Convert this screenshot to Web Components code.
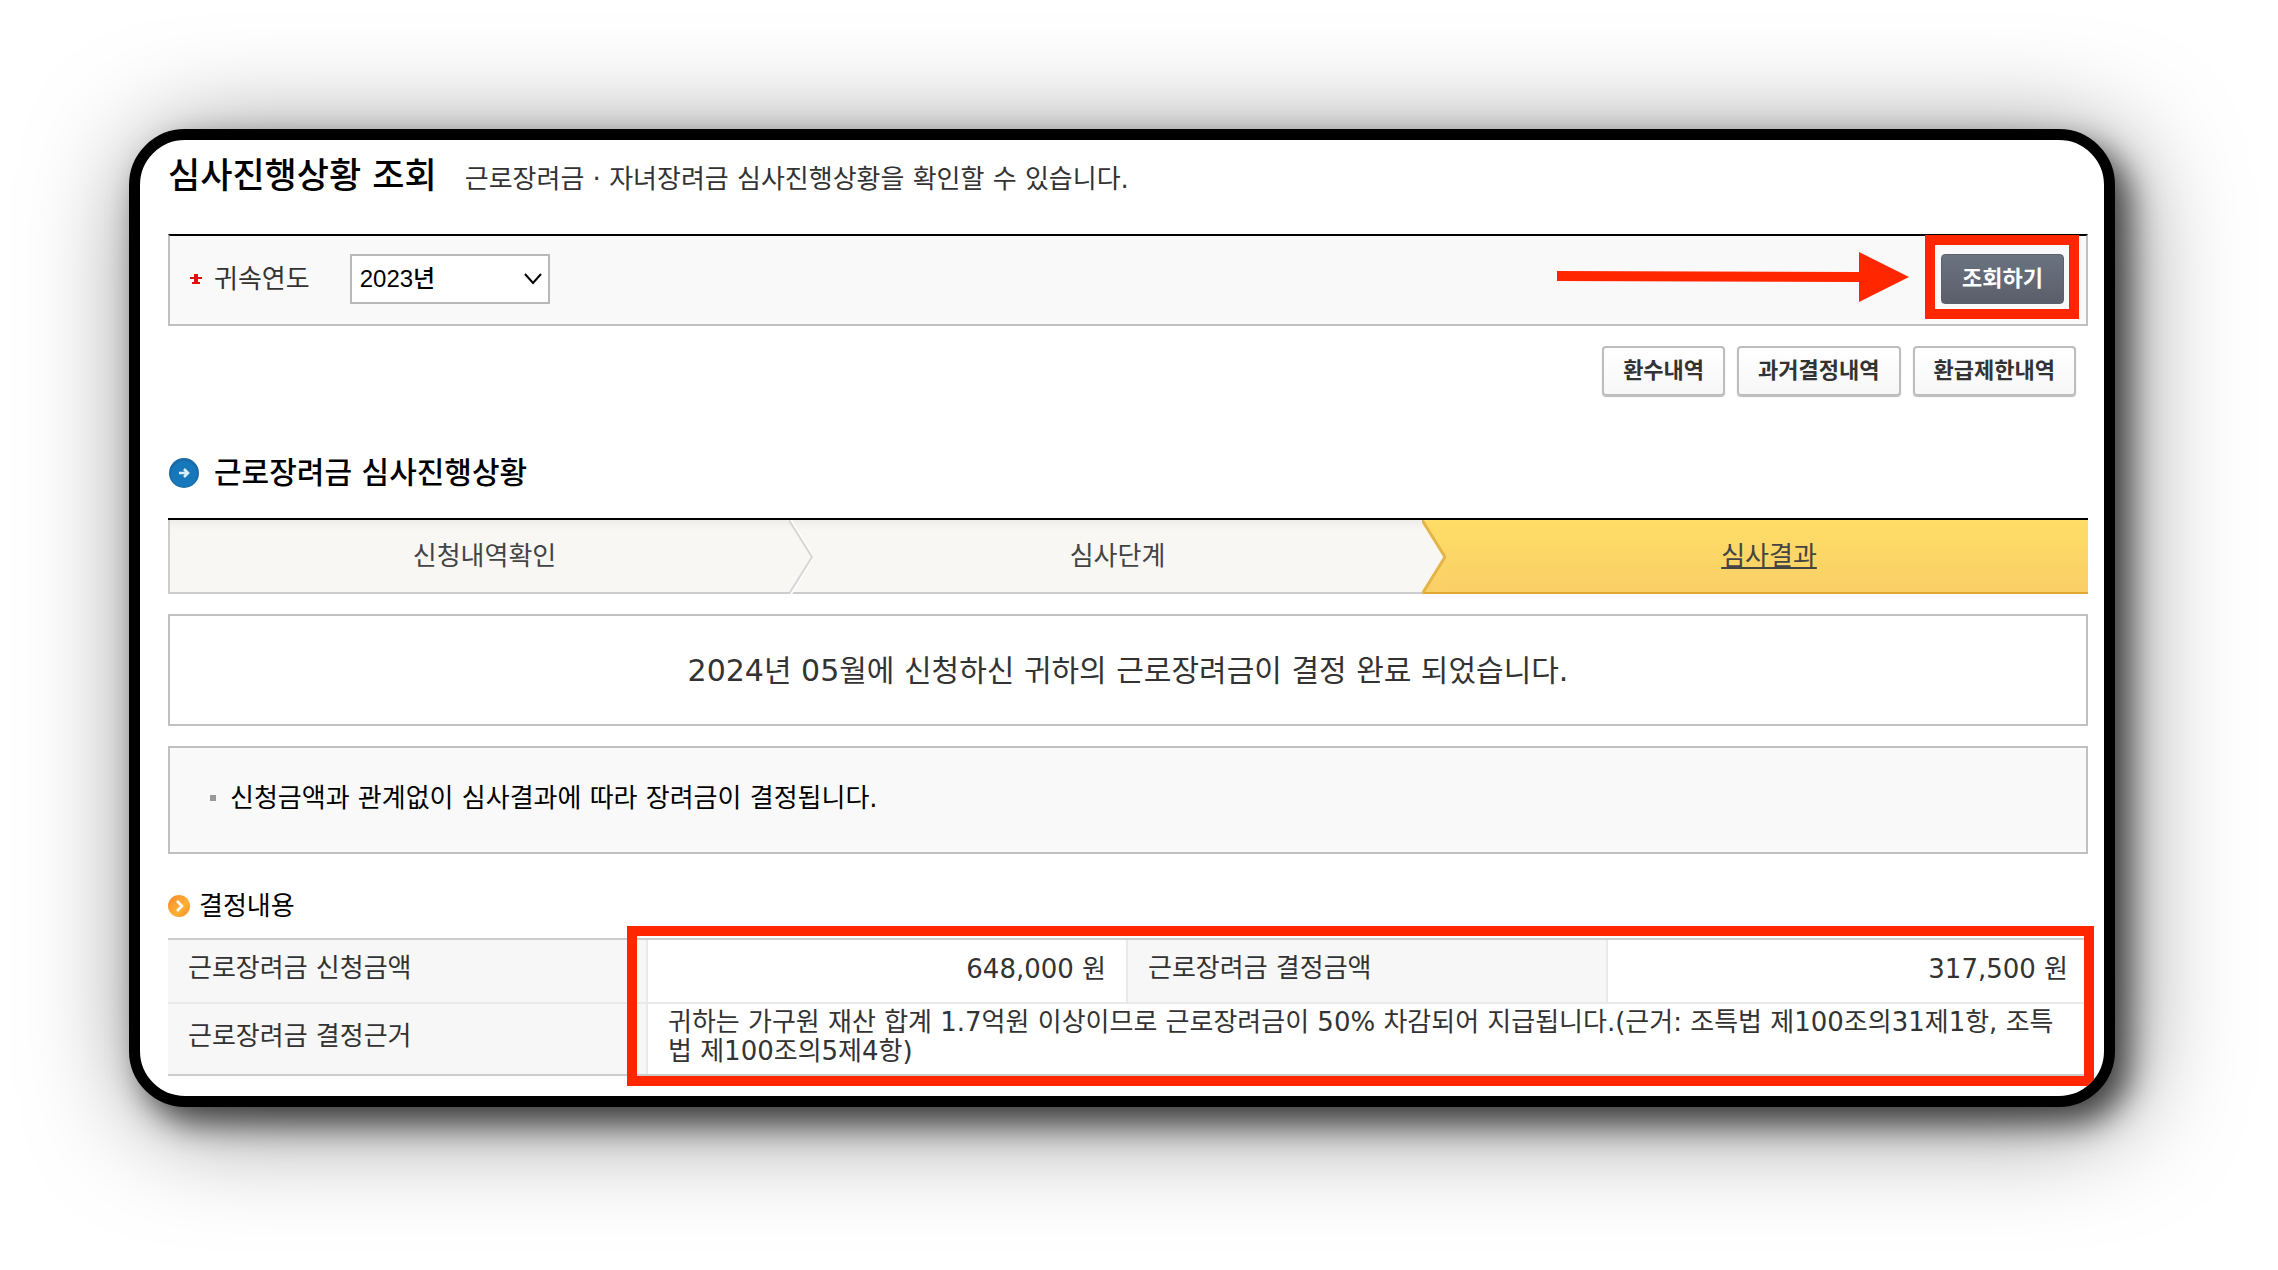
<!DOCTYPE html>
<html lang="ko">
<head>
<meta charset="utf-8">
<title>심사진행상황 조회</title>
<style>
  body {
    margin: 0;
    padding: 129px 163px 163px 129px;
    background: #fff;
    color: #333;
    font: 26px/30px "DejaVu Sans", "Noto Sans CJK KR", sans-serif;
  }
</style>
</head>
<body>
<screen-card>
  <page-title>
    심사진행상황 조회
    <span slot="description">근로장려금 · 자녀장려금 심사진행상황을 확인할 수 있습니다.</span>
  </page-title>
  <search-panel></search-panel>
  <history-actions></history-actions>
  <section-title>근로장려금 심사진행상황</section-title>
  <progress-steps></progress-steps>
  <message-box>2024년 05월에 신청하신 귀하의 근로장려금이 결정 완료 되었습니다.</message-box>
  <note-box>신청금액과 관계없이 심사결과에 따라 장려금이 결정됩니다.</note-box>
  <sub-title>결정내용</sub-title>
  <decision-table></decision-table>
</screen-card>

<script>
const define = (name, html) => {
  const template = document.createElement('template');
  template.innerHTML = html;
  customElements.define(name, class extends HTMLElement {
    constructor() {
      super();
      this.attachShadow({ mode: 'open' }).append(template.content.cloneNode(true));
    }
  });
};

define('screen-card', `
  <style>
    :host {
      display: block;
      border: 11px solid #000;
      border-radius: 56px;
      background: #fff;
      overflow: hidden;
      box-shadow: 14px 16px 32px rgba(0,0,0,.65), 12px 14px 110px rgba(0,0,0,.5);
    }
    main { display: block; padding: 16px 16px 20px 28px; }
  </style>
  <main><slot></slot></main>`);

define('page-title', `
  <style>
    :host { display: flex; align-items: baseline; gap: 28px; height: 78px; }
    h1 { margin: 0; font-size: 35px; line-height: 40px; font-weight: 500; color: #000; }
    p { margin: 0; }
  </style>
  <h1><slot></slot></h1>
  <p><slot name="description"></slot></p>`);

define('search-panel', `
  <style>
    :host { display: block; }
    form {
      display: flex; align-items: center;
      padding: 18px 22px 20px 20px;
      border: 2px solid #c0c0c0; border-top-color: #000;
      background: #f9f9f9;
    }
    .mark { width: 12px; height: 12px; margin-right: 12px; }
    label { margin-right: 40px; }
    .pick { position: relative; width: 200px; }
    select {
      appearance: none; display: block; width: 100%; height: 50px; margin: 0; padding: 0 8px;
      border: 2px solid #b9b9b9; border-radius: 0; background: #fff; color: #000;
      font: 500 24px/30px "Liberation Sans", "Noto Sans CJK KR", sans-serif;
    }
    .pick svg { position: absolute; right: 8px; top: 19px; pointer-events: none; }
    .action { position: relative; margin-left: auto; }
    button {
      display: block; height: 50px; width: 123px; padding: 0; border: 1px solid #5b616d; border-radius: 4px;
      background: linear-gradient(#6b7380, #5a5e6a); color: #fff;
      font: 700 22px/30px "DejaVu Sans", "Noto Sans CJK KR", sans-serif;
    }
    .ring { position: absolute; inset: -19px -15px -15px -16px; border: 10px solid #ff2600; }
    .arrow { position: absolute; right: 155px; top: -2px; }
  </style>
  <form>
    <svg class="mark" viewBox="0 0 12 12"><path d="M4 1h4v3h4v2H8v3h2v2H2V9h2V6H0V4h4z" fill="#e01010"/></svg>
    <label for="year">귀속연도</label>
    <div class="pick">
      <select id="year"><option>2023년</option></select>
      <svg width="18" height="12" viewBox="0 0 18 12"><path d="M1 1l8 9 8-9" fill="none" stroke="#000" stroke-width="2"/></svg>
    </div>
    <div class="action">
      <button type="button">조회하기</button>
      <div class="ring"></div>
      <svg class="arrow" width="352" height="50" viewBox="0 0 352 50"><path d="M0 19l302 1V0l50 25-50 25V30L0 29z" fill="#ff2600"/></svg>
    </div>
  </form>`);

define('history-actions', `
  <style>
    :host { display: flex; justify-content: flex-end; gap: 12px; padding: 20px 12px 0 0; }
    button {
      height: 50px; padding: 0 19px; border: 2px solid #bdbdbd; border-radius: 4px;
      background: linear-gradient(#fff, #f7f7f7); color: #333; box-shadow: 0 1px 1px #bbb;
      font: 700 22px/30px "DejaVu Sans", "Noto Sans CJK KR", sans-serif;
    }
  </style>
  <button type="button">환수내역</button>
  <button type="button">과거결정내역</button>
  <button type="button">환급제한내역</button>`);

define('section-title', `
  <style>
    :host { display: flex; align-items: center; gap: 15px; padding: 58px 0 26px 1px; }
    h2 { margin: 0; font-size: 30px; line-height: 38px; font-weight: 500; color: #000; }
  </style>
  <svg width="30" height="30" viewBox="0 0 30 30">
    <circle cx="15" cy="15" r="15" fill="#1b6aa8"/><circle cx="15" cy="16" r="13" fill="#1678bb"/>
    <path d="M10 15h9M15 11l4 4-4 4" fill="none" stroke="#d9effb" stroke-width="2.6"/>
  </svg>
  <h2><slot></slot></h2>`);

define('progress-steps', `
  <style>
    :host { display: block; }
    ol {
      display: grid; grid-template-columns: 621fr 24px 609fr 24px 642fr;
      margin: 0; padding: 0; list-style: none; border-top: 2px solid #000; color: #444;
    }
    li { box-sizing: border-box; height: 74px; display: flex; align-items: center; justify-content: center; }
    .step { background: linear-gradient(#eeede9, #f8f7f3 10px); border-bottom: 2px solid #ccc; }
    .first { border-left: 2px solid #ccc; padding-left: 10px; }
    .now { background: linear-gradient(#ffdd66, #f9cf66); border-bottom: 2px solid #e0a832; padding-left: 4px; }
    svg { display: block; }
    a { color: inherit; text-decoration: underline; text-decoration-thickness: 2px; text-underline-offset: 2px; }
  </style>
  <ol>
    <li class="step first">신청내역확인</li>
    <li role="presentation"><svg width="24" height="74" viewBox="0 0 24 74">
      <defs><linearGradient id="g" x2="0" y2="1"><stop stop-color="#eeede9"/><stop offset=".14" stop-color="#f8f7f3"/></linearGradient></defs>
      <path d="M0 0h24v74H0z" fill="url(#g)"/><path d="M0 73h24" stroke="#ccc" stroke-width="2"/>
      <path d="M2 0l22 37L2 74" fill="none" stroke="#fff" stroke-width="2"/><path d="M0 0l23 37L0 74" fill="none" stroke="#d6d6d6" stroke-width="2"/></svg></li>
    <li class="step">심사단계</li>
    <li role="presentation"><svg width="24" height="74" viewBox="0 0 24 74">
      <defs><linearGradient id="y" x2="0" y2="1"><stop stop-color="#ffdd66"/><stop offset="1" stop-color="#f9cf66"/></linearGradient>
      <linearGradient id="w" x2="0" y2="1"><stop stop-color="#eeede9"/><stop offset=".14" stop-color="#f8f7f3"/></linearGradient></defs>
      <path d="M0 0h24v74H0z" fill="url(#y)"/><path d="M0 73h24" stroke="#e0a832" stroke-width="2"/>
      <path d="M0 0l23 37L0 74z" fill="url(#w)"/><path d="M0 0l23 37L0 74" fill="none" stroke="#e3b548" stroke-width="3"/></svg></li>
    <li class="now"><a href="#result">심사결과</a></li>
  </ol>`);

define('message-box', `
  <style>
    :host { display: block; margin-top: 20px; padding: 37px 20px 35px; border: 2px solid #c0c0c0; text-align: center; font-size: 30px; line-height: 36px; }
  </style>
  <slot></slot>`);

define('note-box', `
  <style>
    :host { display: block; margin-top: 20px; padding: 35px 40px 39px; border: 2px solid #c0c0c0; background: #f9f9f9; color: #000; }
    ul { margin: 0; padding: 0; list-style: none; }
    li { display: flex; align-items: center; gap: 14px; }
    li::before { content: ""; width: 6px; height: 6px; background: #999; }
  </style>
  <ul><li><span><slot></slot></span></li></ul>`);

define('sub-title', `
  <style>
    :host { display: flex; align-items: center; gap: 9px; padding: 37px 0 17px; }
    h3 { margin: 0; font-size: 26px; line-height: 30px; font-weight: 400; color: #000; }
  </style>
  <svg width="22" height="22" viewBox="0 0 22 22">
    <defs><linearGradient id="o" x2="1" y2="1"><stop stop-color="#f98a2b"/><stop offset=".6" stop-color="#fdb035"/><stop offset="1" stop-color="#f58f27"/></linearGradient></defs>
    <circle cx="11" cy="11" r="11" fill="url(#o)"/><path d="M9 6l5 5-5 5" fill="none" stroke="#fff" stroke-width="2.6"/>
  </svg>
  <h3><slot></slot></h3>`);

define('decision-table', `
  <style>
    :host { display: block; position: relative; }
    table {
      width: 100%; table-layout: fixed; border-collapse: separate; border-spacing: 0;
      border-top: 2px solid #ccc; border-bottom: 2px solid #ccc;
    }
    th, td { text-align: left; font-weight: 400; line-height: 29px; padding: 14px 20px 19px; }
    th { background: #f7f7f7; }
    th, td:not(:last-child) { border-right: 2px solid #e9e9e9; }
    tr:first-child > * { border-bottom: 2px solid #e9e9e9; }
    td.amount { text-align: right; padding: 15px 20px 18px; }
    td.reason { padding: 4px 20px 8px; }
    .ring { position: absolute; inset: -12px -6px -10px calc(25% - 21px); border: 10px solid #ff2600; }
  </style>
  <table>
    <tr><th scope="row">근로장려금 신청금액</th><td class="amount">648,000 원</td><th scope="row">근로장려금 결정금액</th><td class="amount">317,500 원</td></tr>
    <tr><th scope="row">근로장려금 결정근거</th><td class="reason" colspan="3">귀하는 가구원 재산 합계 1.7억원 이상이므로 근로장려금이 50% 차감되어 지급됩니다.(근거: 조특법 제100조의31제1항, 조특법 제100조의5제4항)</td></tr>
  </table>
  <div class="ring"></div>`);
</script>
</body>
</html>
